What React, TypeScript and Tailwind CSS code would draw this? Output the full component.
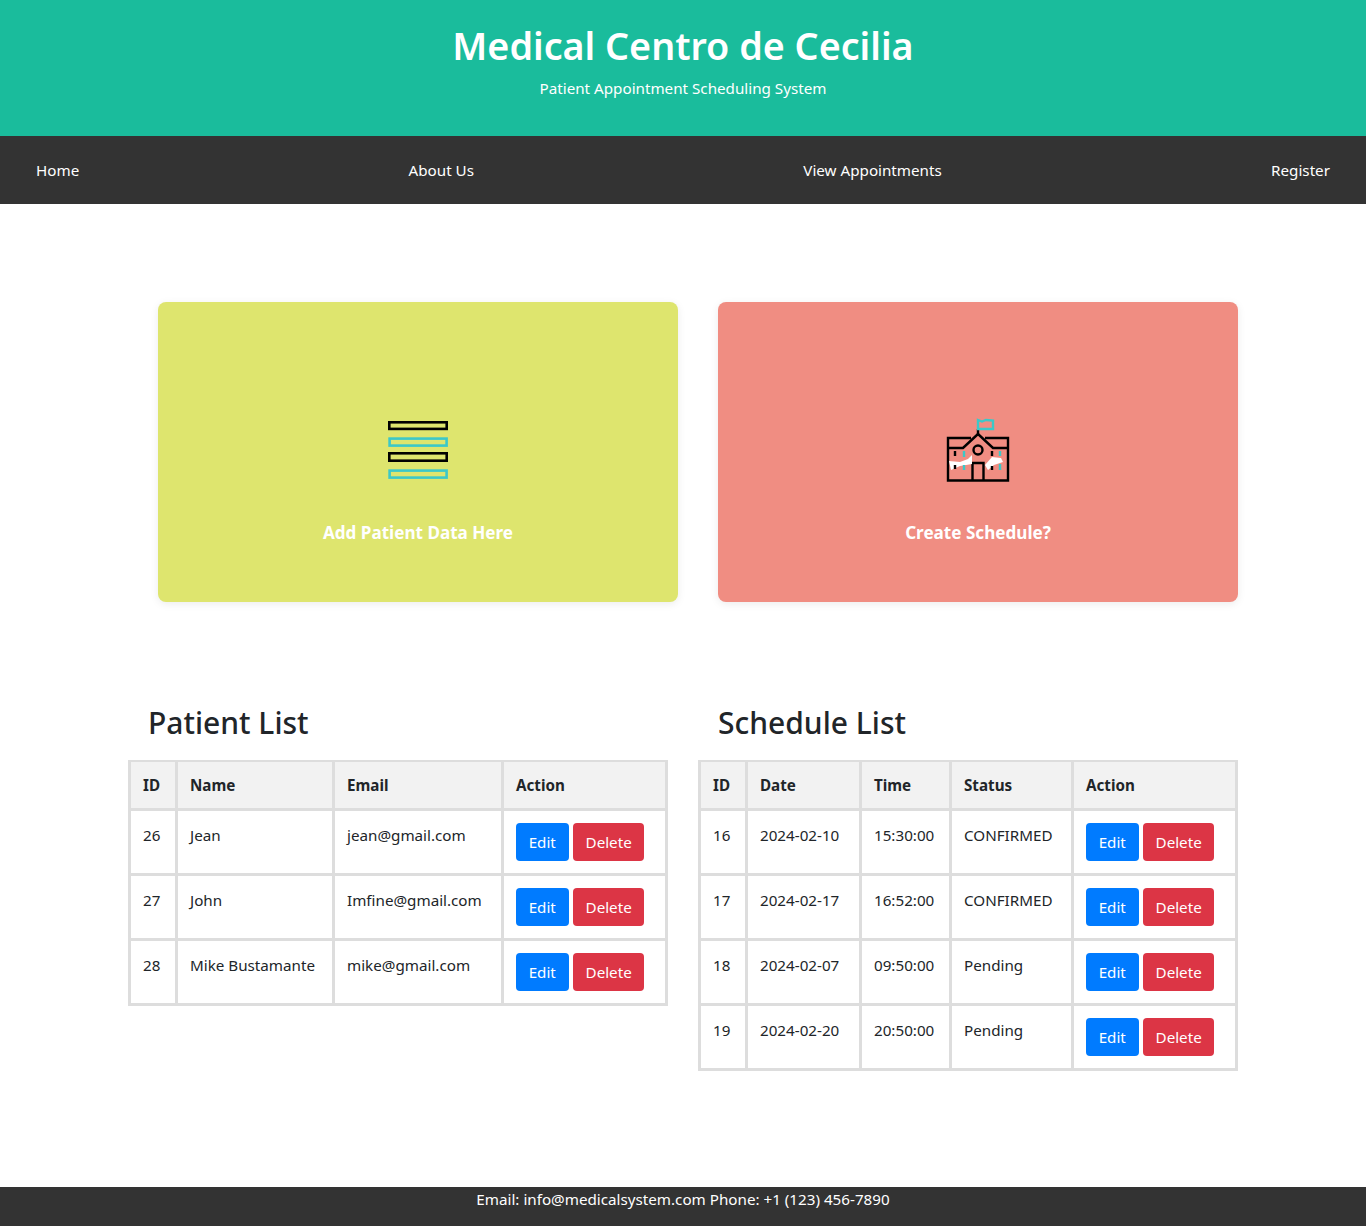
const patients = [
  { id: 26, name: "Jean", email: "jean@gmail.com" },
  { id: 27, name: "John", email: "Imfine@gmail.com" },
  { id: 28, name: "Mike Bustamante", email: "mike@gmail.com" },
];

const schedules = [
  { id: 16, date: "2024-02-10", time: "15:30:00", status: "CONFIRMED" },
  { id: 17, date: "2024-02-17", time: "16:52:00", status: "CONFIRMED" },
  { id: 18, date: "2024-02-07", time: "09:50:00", status: "Pending" },
  { id: 19, date: "2024-02-20", time: "20:50:00", status: "Pending" },
];

function Th({ children, w }: { children: string; w: string }) {
  return (
    <th className={`${w} h-[48px] border-x-[3px] border-y-2 border-[#dddddd] bg-[#f2f2f2] px-3 text-left font-bold`}>
      {children}
    </th>
  );
}

function Td({ children }: { children: React.ReactNode }) {
  return <td className="h-[65px] border-[3px] border-[#dddddd] px-3 pt-3 align-top">{children}</td>;
}

function Actions() {
  return (
    <div className="flex gap-[4.4px] pb-3">
      <button className="h-[38px] w-[52.5px] rounded bg-[#007bff] text-white">Edit</button>
      <button className="h-[38px] w-[71.5px] rounded bg-[#dc3545] text-white">Delete</button>
    </div>
  );
}

function ListIcon() {
  return (
    <svg width="60" height="60" viewBox="0 0 60 60" fill="none" strokeWidth="2.6">
      <rect x="1.3" y="2.3" width="57.4" height="6.6" stroke="#000" />
      <rect x="1.6" y="18.6" width="57" height="7" stroke="#3cc8c8" />
      <rect x="1.3" y="33.3" width="57.4" height="7.4" stroke="#000" />
      <rect x="1.6" y="50.6" width="57" height="7" stroke="#3cc8c8" />
    </svg>
  );
}

function SchoolIcon() {
  return (
    <svg width="64" height="64" viewBox="0 0 64 64" fill="none" strokeWidth="2.4" stroke="#000">
      <path d="M32 11v6" />
      <path d="M32 2l4 1.5L40 2l7 .5V11H32z" stroke="#3cc8c8" />
      <path d="M25 20H2v42.5h60V20H39" />
      <path d="M2 30h15L32 16l15 14h15" />
      <circle cx="32" cy="32" r="4.5" />
      <path d="M26.5 62.5V45h11v17.5" />
      <path d="M3 43l11 1 8-3 4-4v9l-12 2-9 4z" fill="#fff" stroke="none" />
      <path d="M39 47l7-8 9 1 2 4-9 3-6 5z" fill="#fff" stroke="none" />
      <path d="M9 33v5M9 47v4M46 33v5M46 48v4" />
      <path d="M18 33v6M18 47v5M54 33v5M54 46v6" stroke="#3cc8c8" />
    </svg>
  );
}

export default function App() {
  return (
    <div className="flex min-h-[1227px] flex-col bg-white font-['Noto_Sans',sans-serif] text-[15.2px] leading-6 text-[#212529]">
      <header className="h-[136px] bg-[#1abc9c] pt-5 text-center text-white">
        <h1 className="text-[37.7px] leading-[52px] font-semibold">Medical Centro de Cecilia</h1>
        <p className="mt-1">Patient Appointment Scheduling System</p>
      </header>

      <nav className="flex h-[68px] items-center justify-between bg-[#333333] px-9 text-white">
        <a>Home</a>
        <a>About Us</a>
        <a>View Appointments</a>
        <a>Register</a>
      </nav>

      <main className="flex-1">
        <div className="mt-[98px] ml-[158px] flex gap-10">
          <div className="flex h-[300px] w-[520px] flex-col items-center rounded-lg bg-[#dee56e] pt-[118px] font-bold text-white shadow-[0_2px_8px_rgba(0,0,0,0.08)]">
            <ListIcon />
            <p className="mt-[41px] text-[17.1px]">Add Patient Data Here</p>
          </div>
          <div className="flex h-[300px] w-[520px] flex-col items-center rounded-lg bg-[#f08d82] pt-[116px] font-bold text-white shadow-[0_2px_8px_rgba(0,0,0,0.08)]">
            <SchoolIcon />
            <p className="mt-[39px] text-[17.1px]">Create Schedule?</p>
          </div>
        </div>

        <div className="mt-[100px] ml-[128px] flex items-start gap-[30px]">
          <section className="w-[540px]">
            <h2 className="pl-5 text-[30px] leading-[42px] font-medium">Patient List</h2>
            <table className="mt-4 w-full table-fixed border-collapse">
              <thead>
                <tr>
                  <Th w="w-[47px]">ID</Th>
                  <Th w="w-[157px]">Name</Th>
                  <Th w="w-[169px]">Email</Th>
                  <Th w="w-[164px]">Action</Th>
                </tr>
              </thead>
              <tbody>
                {patients.map((p) => (
                  <tr key={p.id}>
                    <Td>{p.id}</Td>
                    <Td>{p.name}</Td>
                    <Td>{p.email}</Td>
                    <Td><Actions /></Td>
                  </tr>
                ))}
              </tbody>
            </table>
          </section>

          <section className="w-[540px]">
            <h2 className="pl-5 text-[30px] leading-[42px] font-medium">Schedule List</h2>
            <table className="mt-4 w-full table-fixed border-collapse">
              <thead>
                <tr>
                  <Th w="w-[47px]">ID</Th>
                  <Th w="w-[114px]">Date</Th>
                  <Th w="w-[90px]">Time</Th>
                  <Th w="w-[122px]">Status</Th>
                  <Th w="w-[164px]">Action</Th>
                </tr>
              </thead>
              <tbody>
                {schedules.map((s) => (
                  <tr key={s.id}>
                    <Td>{s.id}</Td>
                    <Td>{s.date}</Td>
                    <Td>{s.time}</Td>
                    <Td>{s.status}</Td>
                    <Td><Actions /></Td>
                  </tr>
                ))}
              </tbody>
            </table>
          </section>
        </div>
      </main>

      <footer className="mb-px h-[39px] bg-[#333333] text-center text-white">
        Email: info@medicalsystem.com Phone: +1 (123) 456-7890
      </footer>
    </div>
  );
}
